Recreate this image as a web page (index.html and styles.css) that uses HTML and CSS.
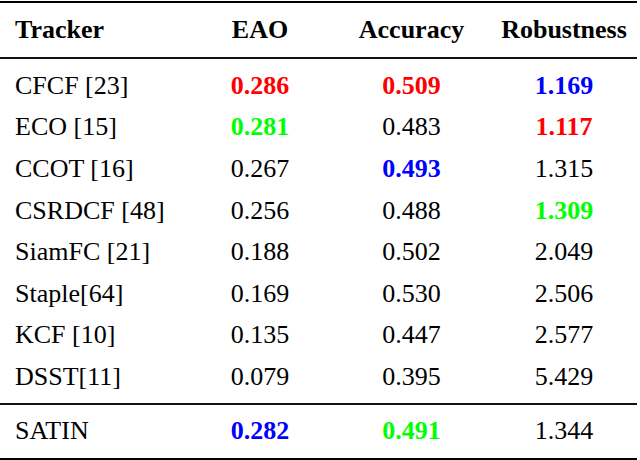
FILE: index.html
```html
<!DOCTYPE html>
<html lang="en">
<head>
<meta charset="utf-8">
<title>Tracker comparison</title>
<link rel="stylesheet" href="styles.css">
</head>
<body>
<table class="results">
  <colgroup>
    <col class="c-name">
    <col class="c-eao">
    <col class="c-acc">
    <col class="c-rob">
  </colgroup>
  <thead>
    <tr>
      <th class="name">Tracker</th>
      <th>EAO</th>
      <th>Accuracy</th>
      <th>Robustness</th>
    </tr>
  </thead>
  <tbody class="main">
    <tr class="first"><td class="name">CFCF [23]</td><td class="red">0.286</td><td class="red">0.509</td><td class="blue">1.169</td></tr>
    <tr><td class="name">ECO [15]</td><td class="green">0.281</td><td>0.483</td><td class="red">1.117</td></tr>
    <tr><td class="name">CCOT [16]</td><td>0.267</td><td class="blue">0.493</td><td>1.315</td></tr>
    <tr><td class="name">CSRDCF [48]</td><td>0.256</td><td>0.488</td><td class="green">1.309</td></tr>
    <tr><td class="name">SiamFC [21]</td><td>0.188</td><td>0.502</td><td>2.049</td></tr>
    <tr><td class="name">Staple[64]</td><td>0.169</td><td>0.530</td><td>2.506</td></tr>
    <tr><td class="name">KCF [10]</td><td>0.135</td><td>0.447</td><td>2.577</td></tr>
    <tr class="last"><td class="name">DSST[11]</td><td>0.079</td><td>0.395</td><td>5.429</td></tr>
  </tbody>
  <tbody class="ours">
    <tr><td class="name">SATIN</td><td class="blue">0.282</td><td class="green">0.491</td><td>1.344</td></tr>
  </tbody>
</table>
</body>
</html>
```

FILE: styles.css
```css
html, body {
  margin: 0;
  padding: 0;
  background: #ffffff;
}

.results {
  margin-top: 1px;
  width: 637px;
  border-collapse: collapse;
  table-layout: fixed;
  font-family: "Liberation Serif", "Times New Roman", serif;
  font-size: 26px;
  color: #000000;
  border-top: 2px solid #000000;
  border-bottom: 2px solid #000000;
}

.c-name { width: 188px; }
.c-eao { width: 144px; }
.c-acc { width: 159px; }
.c-rob { width: 146px; }

.results th,
.results td {
  padding: 0;
  text-align: center;
  vertical-align: middle;
  line-height: 30px;
  white-space: nowrap;
}

.results .name {
  text-align: left;
  padding-left: 15px;
}

.results thead th {
  font-weight: bold;
  height: 54px;
  border-bottom: 2px solid #111111;
}

.main td {
  height: 41.6px;
}

.main tr.first td {
  padding-top: 6px;
}

.main tr.last td {
  padding-bottom: 5px;
}

.ours td {
  height: 53px;
  border-top: 2px solid #111111;
}

.red { color: #ff0000; font-weight: bold; }
.green { color: #00ff00; font-weight: bold; }
.blue { color: #0000ff; font-weight: bold; }
```
